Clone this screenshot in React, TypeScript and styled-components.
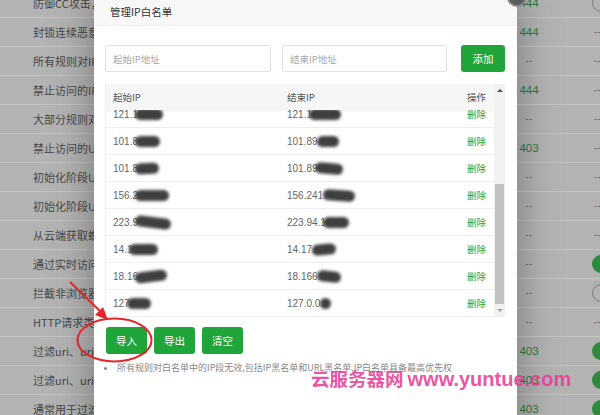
import React from "react";
import styled, { createGlobalStyle } from "styled-components";

const GlobalStyle = createGlobalStyle`
  html, body {
    margin: 0;
    padding: 0;
    width: 600px;
    height: 415px;
    overflow: hidden;
    font-family: "Noto Sans CJK SC", "Noto Sans", "Liberation Sans", sans-serif;
  }
  * { box-sizing: border-box; }
`;

const Stage = styled.div`
  position: relative;
  width: 600px;
  height: 415px;
  overflow: hidden;
  background: #b3b3b3;
`;

const BgList = styled.div`
  margin-top: -11px;
`;

const BgRow = styled.div`
  display: grid;
  grid-template-columns: 515px 28px 49px 60px;
  align-items: center;
  height: 29px;
  border-bottom: 1px solid #c4c4c4;
  font-size: 11px;
  color: #474747;
  white-space: nowrap;
`;

const BgName = styled.div`
  padding-left: 33px;
  overflow: hidden;
`;

const BgCode = styled.div<{ $green?: boolean }>`
  text-align: center;
  font-family: "Liberation Sans", sans-serif;
  font-size: ${(p) => (p.$green ? "11.5px" : "9px")};
  color: ${(p) => (p.$green ? "#2d7a3d" : "#555")};
  letter-spacing: ${(p) => (p.$green ? "0" : "0.5px")};
`;

const BgToggle = styled.div<{ $on?: boolean }>`
  width: 18px;
  height: 18px;
  border-radius: 50%;
  background: ${(p) => (p.$on ? "#2f8a3e" : "transparent")};
  border: ${(p) => (p.$on ? "none" : "1.5px solid #7a7a7a")};
`;

const BgDash = styled.div`
  font-family: "Liberation Sans", sans-serif;
  font-size: 9px;
  color: #555;
  letter-spacing: 0.5px;
  padding-left: 2px;
`;

const Dialog = styled.div`
  position: absolute;
  left: 94px;
  top: -2px;
  width: 423px;
  height: 460px;
  background: #fff;
  box-shadow: 0 0 40px rgba(0, 0, 0, 0.35);
`;

const DialogHeader = styled.div`
  height: 28px;
  line-height: 27px;
  padding-left: 16px;
  background: #f8f8f8;
  border-bottom: 1px solid #eeeeee;
  font-size: 10.5px;
  color: #333;
`;

const CloseBtn = styled.div`
  position: absolute;
  right: -10px;
  top: -11px;
  width: 20px;
  height: 20px;
  border-radius: 50%;
  background: #5c5c5c;
  border: 2px solid #8a8a8a;
`;

const DialogBody = styled.div`
  padding: 19px 12px 0 11px;
`;

const InputRow = styled.div`
  display: flex;
  align-items: center;
  height: 27px;
  margin-bottom: 12px;
`;

const TextInput = styled.input<{ $w: number; $ml?: number }>`
  width: ${(p) => p.$w}px;
  margin-left: ${(p) => p.$ml ?? 0}px;
  height: 27px;
  border: 1px solid #e2e2e2;
  border-radius: 2px;
  padding: 0 7px;
  font-family: inherit;
  font-size: 9.5px;
  color: #555;
  outline: none;
  &::placeholder { color: #a8a8a8; }
`;

const GreenButton = styled.button<{ $w: number }>`
  width: ${(p) => p.$w}px;
  height: 27px;
  border: none;
  border-radius: 3px;
  background: #20a53a;
  color: #fff;
  font-family: inherit;
  font-size: 10.5px;
  padding: 0;
  cursor: pointer;
`;

const AddButton = styled(GreenButton)`
  margin-left: auto;
`;

const TableWrap = styled.div`
  display: flex;
  height: 233px;
  border-left: 1px solid #eeeeee;
`;

const TableViewport = styled.div`
  flex: 1;
  overflow: hidden;
  font-size: 9.5px;
  color: #666;
`;

const HeadRow = styled.div`
  position: relative;
  z-index: 1;
  display: grid;
  grid-template-columns: 174px 1fr 60px;
  align-items: center;
  height: 26px;
  background: #f6f6f6;
  box-shadow: 0 1px 2px rgba(0, 0, 0, 0.05);
  color: #555;
`;

const Body = styled.div`
  margin-top: -9px;
`;

const Row = styled.div`
  display: grid;
  grid-template-columns: 174px 1fr 60px;
  align-items: center;
  height: 27px;
  border-bottom: 1px solid #eeeeee;
`;

const Cell = styled.div<{ $right?: boolean }>`
  padding: 0 ${(p) => (p.$right ? "8px" : "0")} 0 ${(p) => (p.$right ? "0" : "7px")};
  text-align: ${(p) => (p.$right ? "right" : "left")};
  white-space: nowrap;
  font-family: "Noto Sans CJK SC", "Liberation Sans", sans-serif;
`;

const IpText = styled.span`
  font-family: "Liberation Sans", sans-serif;
  font-size: 10px;
  color: #666;
`;

const Blob = styled.span<{ $w: number; $tilt?: number }>`
  display: inline-block;
  width: ${(p) => p.$w}px;
  height: 11px;
  margin-left: -3px;
  vertical-align: -2px;
  border-radius: 6px;
  background: #3f3f3f;
  filter: blur(1.8px);
  transform: rotate(${(p) => p.$tilt ?? 0}deg);
`;

const DeleteLink = styled.span`
  color: #20a53a;
`;

const Scrollbar = styled.div`
  width: 11px;
  display: flex;
  flex-direction: column;
  background: #f1f1f1;
`;

const ScrollArrow = styled.div<{ $down?: boolean }>`
  height: 14px;
  display: flex;
  align-items: center;
  justify-content: center;
  &::after {
    content: "";
    border-left: 3px solid transparent;
    border-right: 3px solid transparent;
    ${(p) =>
      p.$down ? "border-top: 3px solid #a3a3a3;" : "border-bottom: 3px solid #505050;"}
  }
`;

const ScrollTrack = styled.div`
  flex: 1;
  padding: 87px 1px 0;
`;

const ScrollThumb = styled.div`
  height: 120px;
  background: #c1c1c1;
`;

const ButtonRow = styled.div`
  display: flex;
  gap: 7px;
  margin-top: 10px;
  padding-left: 1px;
`;

const Note = styled.ul`
  margin: 7px 0 0;
  padding-left: 12px;
  font-size: 9px;
  color: #888;
  white-space: nowrap;
  li { padding-left: 0; }
`;

const Annotation = styled.svg`
  position: absolute;
  left: 0;
  top: 0;
  pointer-events: none;
`;

const Watermark = styled.div`
  position: absolute;
  left: 311px;
  top: 365px;
  display: flex;
  align-items: baseline;
  gap: 4px;
  color: rgba(230, 62, 150, 0.9);
  font-weight: bold;
  white-space: nowrap;
  pointer-events: none;
`;

const WmCn = styled.span`
  font-family: "Noto Sans CJK SC", sans-serif;
  font-size: 18.5px;
`;

const WmEn = styled.span`
  font-family: "Liberation Sans", sans-serif;
  font-size: 20px;
`;

type BgItem = { name: string; code: string; b: "dash" | "on" | "off" };

const bgRows: BgItem[] = [
  { name: "防御CC攻击，具体防御参数", code: "444", b: "off" },
  { name: "封锁连续恶意请求", code: "444", b: "dash" },
  { name: "所有规则对IP白名单无效", code: "--", b: "dash" },
  { name: "禁止访问的IP段", code: "444", b: "dash" },
  { name: "大部分规则对URL白名单无效", code: "--", b: "dash" },
  { name: "禁止访问的URL地址", code: "403", b: "dash" },
  { name: "初始化阶段UA过滤规则", code: "--", b: "dash" },
  { name: "初始化阶段URL过滤规则", code: "--", b: "dash" },
  { name: "从云端获取蜘蛛IP", code: "--", b: "dash" },
  { name: "通过实时访问日志分析", code: "--", b: "on" },
  { name: "拦截非浏览器请求", code: "--", b: "off" },
  { name: "HTTP请求类型过滤", code: "--", b: "dash" },
  { name: "过滤uri、uri参数中常见", code: "403", b: "on" },
  { name: "过滤uri、uri参数中常见", code: "403", b: "on" },
  { name: "通常用于过滤浏览器", code: "403", b: "on" },
];

type IpRow = { a: string; aw: number; at?: number; b: string; bw: number; bt?: number };

const ipRows: IpRow[] = [
  { a: "121.1", aw: 28, b: "121.1", bw: 32 },
  { a: "101.8", aw: 25, b: "101.89.", bw: 22 },
  { a: "101.8", aw: 24, at: -3, b: "101.89", bw: 28, bt: 5 },
  { a: "156.2", aw: 34, b: "156.241.", bw: 32, bt: 4 },
  { a: "223.9", aw: 36, at: 7, b: "223.94.1", bw: 26 },
  { a: "14.1", aw: 29, b: "14.17.", bw: 24, bt: -5 },
  { a: "18.16", aw: 32, at: -7, b: "18.166.", bw: 24, bt: 6 },
  { a: "127", aw: 24, b: "127.0.0.", bw: 11 },
];

function BgColB({ kind }: { kind: BgItem["b"] }) {
  if (kind === "dash") return <BgDash>--</BgDash>;
  return <BgToggle $on={kind === "on"} />;
}

export default function App() {
  return (
    <>
      <GlobalStyle />
      <Stage>
        <BgList>
          {bgRows.map((r, i) => (
            <BgRow key={i}>
              <BgName>{r.name}</BgName>
              <BgCode $green={r.code !== "--"}>{r.code}</BgCode>
              <div />
              <BgColB kind={r.b} />
            </BgRow>
          ))}
        </BgList>

        <Dialog>
          <DialogHeader>管理IP白名单</DialogHeader>
          <CloseBtn />
          <DialogBody>
            <InputRow>
              <TextInput $w={166} placeholder="起始IP地址" />
              <TextInput $w={165} $ml={11} placeholder="结束IP地址" />
              <AddButton $w={44}>添加</AddButton>
            </InputRow>

            <TableWrap>
              <TableViewport>
                <HeadRow>
                  <Cell>起始IP</Cell>
                  <Cell>结束IP</Cell>
                  <Cell $right>操作</Cell>
                </HeadRow>
                <Body>
                  {ipRows.map((r, i) => (
                    <Row key={i}>
                      <Cell>
                        <IpText>{r.a}</IpText>
                        <Blob $w={r.aw} $tilt={r.at} />
                      </Cell>
                      <Cell>
                        <IpText>{r.b}</IpText>
                        <Blob $w={r.bw} $tilt={r.bt} />
                      </Cell>
                      <Cell $right>
                        <DeleteLink>删除</DeleteLink>
                      </Cell>
                    </Row>
                  ))}
                </Body>
              </TableViewport>
              <Scrollbar>
                <ScrollArrow />
                <ScrollTrack>
                  <ScrollThumb />
                </ScrollTrack>
                <ScrollArrow $down />
              </Scrollbar>
            </TableWrap>

            <ButtonRow>
              <GreenButton $w={41}>导入</GreenButton>
              <GreenButton $w={41}>导出</GreenButton>
              <GreenButton $w={41}>清空</GreenButton>
            </ButtonRow>

            <Note>
              <li>所有规则对白名单中的IP段无效,包括IP黑名单和URL黑名单,IP白名单具备最高优先权</li>
            </Note>
          </DialogBody>
        </Dialog>

        <Annotation width="600" height="415" viewBox="0 0 600 415">
          <ellipse cx="114.5" cy="340" rx="37" ry="21.5" fill="none" stroke="#e3262b" strokeWidth="2" />
          <line x1="70" y1="282" x2="103" y2="314" stroke="#e3262b" strokeWidth="2" />
          <polygon points="108,320 95,315 103,307" fill="#e3262b" />
        </Annotation>

        <Watermark>
          <WmCn>云服务器网</WmCn>
          <WmEn>www.yuntue.com</WmEn>
        </Watermark>
      </Stage>
    </>
  );
}
